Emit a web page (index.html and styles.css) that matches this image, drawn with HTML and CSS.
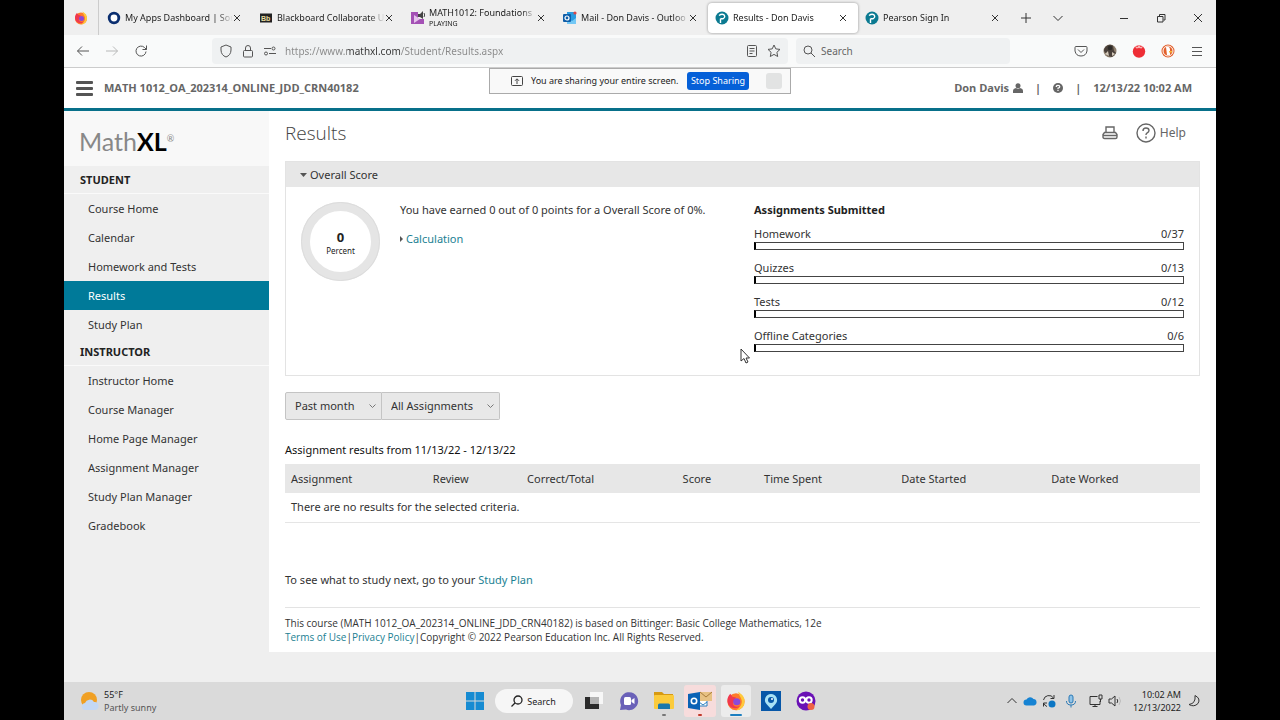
FILE: index.html
```
<!DOCTYPE html>
<html lang="en">
<head>
  <meta charset="UTF-8">
  <meta name="viewport" content="width=device-width, initial-scale=1.0">
  <title>Results - Don Davis</title>
  <link rel="stylesheet" href="styles.css">
</head>
<body>
  <div class="screen">

    <!-- Browser tabs -->
    <div class="tabbar">
      <button class="pinned" aria-label="Firefox">
        <svg width="14" height="14" viewBox="0 0 28 28"><circle cx="14" cy="15" r="12" fill="#ff7a2a"/><path d="M17 1c4 3 9 6 9 13a12 12 0 0 1-12 13c5-3 9-8 8-14-1-4-4-7-5-12z" fill="#ffc93c"/><path d="M2 13c0-4 2-7 4-9l3 4 5 1-3 5c-4 5 2 10 8 7-2 5-17 5-17-8z" fill="#f0384e"/><circle cx="15" cy="15" r="5" fill="#8a4ad8"/></svg>
      </button>
      <div class="tab">
        <svg class="favicon" viewBox="0 0 14 14"><circle cx="7" cy="7" r="4.8" fill="#fff" stroke="#0b2f70" stroke-width="2.8"/></svg>
        <span class="tab-title">My Apps Dashboard | Sou</span>
        <button class="close" aria-label="Close tab"><svg width="8" height="8" viewBox="0 0 8 8"><path d="M1 1l6 6M7 1L1 7"/></svg></button>
      </div>
      <div class="tab">
        <svg class="favicon" viewBox="0 0 14 14"><rect x="1" y="2.500" width="12" height="9" fill="#222"/><text x="2" y="10" font-size="7" font-weight="bold" fill="#e8dca0" font-family="Liberation Sans, sans-serif">Bb</text></svg>
        <span class="tab-title">Blackboard Collaborate U</span>
        <button class="close" aria-label="Close tab"><svg width="8" height="8" viewBox="0 0 8 8"><path d="M1 1l6 6M7 1L1 7"/></svg></button>
      </div>
      <div class="tab">
        <svg class="favicon" viewBox="0 0 14 14"><path d="M0 1h7v7h6v5H0z" fill="#a451b5"/><path d="M3 4l6 4-6 4z" fill="#e5c3ec"/><path d="M7 3h2l3-3v8L9 6H7z" fill="#444"/><path d="M13 2q1.500 2 0 4" stroke="#444" fill="none"/></svg>
        <span class="tab-title two-line">MATH1012: Foundations<small>PLAYING</small></span>
        <button class="close" aria-label="Close tab"><svg width="8" height="8" viewBox="0 0 8 8"><path d="M1 1l6 6M7 1L1 7"/></svg></button>
      </div>
      <div class="tab">
        <svg class="favicon" viewBox="0 0 14 14"><path d="M4 1h9v11H4z" fill="#2a9be0"/><path d="M4 7l5 3 4-3v6H4z" fill="#74c8f5"/><rect x="0" y="3" width="8" height="8" rx="1" fill="#0f5ea8"/><circle cx="4" cy="7" r="2" fill="none" stroke="#fff" stroke-width="1.200"/><circle cx="12" cy="2" r="1.600" fill="#d94848"/></svg>
        <span class="tab-title">Mail - Don Davis - Outloo</span>
        <button class="close" aria-label="Close tab"><svg width="8" height="8" viewBox="0 0 8 8"><path d="M1 1l6 6M7 1L1 7"/></svg></button>
      </div>
      <div class="tab active">
        <svg class="favicon" viewBox="0 0 14 14"><circle cx="7" cy="7" r="6.500" fill="#0b7a91"/><path d="M5.500 12V7.500M4 4.500q3-2 5-.6 1.600 2-.4 3.400-1.400.8-3 .2" fill="none" stroke="#fff" stroke-width="1.400"/></svg>
        <span class="tab-title">Results - Don Davis</span>
        <button class="close" aria-label="Close tab"><svg width="8" height="8" viewBox="0 0 8 8"><path d="M1 1l6 6M7 1L1 7"/></svg></button>
      </div>
      <div class="tab">
        <svg class="favicon" viewBox="0 0 14 14"><circle cx="7" cy="7" r="6.500" fill="#0b7a91"/><path d="M5.500 12V7.500M4 4.500q3-2 5-.6 1.600 2-.4 3.400-1.400.8-3 .2" fill="none" stroke="#fff" stroke-width="1.400"/></svg>
        <span class="tab-title">Pearson Sign In</span>
        <button class="close" aria-label="Close tab"><svg width="8" height="8" viewBox="0 0 8 8"><path d="M1 1l6 6M7 1L1 7"/></svg></button>
      </div>
      <button class="tab-tool" aria-label="New tab"><svg width="10" height="10" viewBox="0 0 10 10"><path d="M5 0v10M0 5h10"/></svg></button>
      <button class="tab-tool" aria-label="List all tabs"><svg width="10" height="10" viewBox="0 0 10 10"><path d="M.5 3L5 7.500 9.500 3"/></svg></button>
      <div class="window-buttons">
        <button aria-label="Minimize"><svg width="10" height="10" viewBox="0 0 10 10"><path d="M1 5.500h8"/></svg></button>
        <button aria-label="Restore"><svg width="10" height="10" viewBox="0 0 10 10"><path d="M1.500 3.500h5.500v5.500H1.500zM3.500 3V1.500H9V7H7.500"/></svg></button>
        <button aria-label="Close"><svg width="10" height="10" viewBox="0 0 10 10"><path d="M1 1l8 8M9 1L1 9"/></svg></button>
      </div>
    </div>

    <!-- Address bar -->
    <div class="navbar">
      <div class="nav-buttons">
        <button aria-label="Back"><svg width="14" height="14" viewBox="0 0 14 14"><path d="M13 7H1.500M6 2.500L1.500 7 6 11.500"/></svg></button>
        <button aria-label="Forward" class="faded"><svg width="14" height="14" viewBox="0 0 14 14"><path d="M1 7h11.500M8 2.500L12.500 7 8 11.500"/></svg></button>
        <button aria-label="Reload"><svg width="14" height="14" viewBox="0 0 14 14"><path d="M12 7.500a5 5 0 1 1-1.500-4L12.500 5.500M12.500 1.500v4h-4"/></svg></button>
      </div>
      <div class="urlbar">
        <svg width="14" height="14" viewBox="0 0 14 14"><path d="M7 1L12 3v3c0 3.500-2 6-5 7-3-1-5-3.500-5-7V3z"/></svg>
        <svg width="14" height="14" viewBox="0 0 14 14"><rect x="2.500" y="6.500" width="9" height="6.500" rx="1"/><path d="M4.500 6.500V4a2.500 2.500 0 0 1 5 0v2.500"/></svg>
        <svg width="14" height="14" viewBox="0 0 14 14"><path d="M1 4.500h7M6 9.500h7"/><circle cx="10.500" cy="4.500" r="1.500"/><circle cx="3" cy="9.500" r="1.500"/></svg>
        <input class="url" type="text" aria-label="Address" value="https://www.mathxl.com/Student/Results.aspx">
        <button aria-label="Reader view"><svg width="14" height="14" viewBox="0 0 14 14"><rect x="2.500" y="1.500" width="9" height="11" rx="1"/><path d="M4.500 4.500h5M4.500 7h5M4.500 9.500h3"/></svg></button>
        <button aria-label="Bookmark"><svg width="14" height="14" viewBox="0 0 14 14"><path d="M7 1l1.800 3.900 4.200.5-3.100 2.900.8 4.200L7 10.400l-3.700 2.100.8-4.200L1 5.400l4.200-.5z"/></svg></button>
      </div>
      <div class="searchbar">
        <svg width="14" height="14" viewBox="0 0 14 14"><circle cx="6" cy="6" r="4"/><path d="M9 9l4 4"/></svg>
        <input type="text" placeholder="Search" aria-label="Search the web">
      </div>
      <div class="extensions">
        <button aria-label="Pocket"><svg width="14" height="14" viewBox="0 0 14 14"><path d="M2 2.500h10q1 0 1 1V7q-1 5-6 5T1 7V3.500q0-1 1-1zM4 5.500l3 3 3-3"/></svg></button>
        <button aria-label="Profile"><svg width="14" height="14" viewBox="0 0 14 14" class="solid"><circle cx="7" cy="7" r="6.500" fill="#8b7c6b"/><path d="M1 7a6 6 0 0 1 9-5.300L11 7l2 2-4 4-4-1z" fill="#4a403a"/><circle cx="7" cy="4" r="2.300" fill="#2d2926"/><path d="M2 10l3-3 1 5zM9 8l3 2-3 2z" fill="#d5cabb"/></svg></button>
        <button aria-label="Tomato timer"><svg width="14" height="14" viewBox="0 0 14 14" class="solid"><circle cx="7" cy="7.500" r="6.200" fill="#ee2d35"/><path d="M2.500 2l3 1L7 1l1.500 2 3-1-2 2.500L7 4 4.500 4.500z" fill="#f9b4b4"/></svg></button>
        <button aria-label="DuckDuckGo"><svg width="14" height="14" viewBox="0 0 14 14" class="solid"><circle cx="7" cy="7" r="6.500" fill="#e2602c"/><circle cx="7" cy="7" r="5" fill="none" stroke="#fff"/><path d="M5 3q4-1 4 3v5H6z" fill="#fff"/><path d="M8 7h3v1.500H8z" fill="#f8b934"/></svg></button>
        <button aria-label="Menu"><svg width="14" height="14" viewBox="0 0 14 14"><path d="M2 3.500h10M2 7.500h10M2 11.500h10"/></svg></button>
      </div>
    </div>

    <!-- Course header -->
    <header class="course-header">
      <button class="burger" aria-label="Toggle menu"><span></span><span></span><span></span></button>
      <span class="course-name">MATH 1012_OA_202314_ONLINE_JDD_CRN40182</span>
      <div class="user-info">
        <span class="user">Don Davis <svg width="10" height="10" viewBox="0 0 10 10"><circle cx="5" cy="2.700" r="2.500"/><path d="M0 10V8q0-2.500 3-3 2 1.300 4 0 3 .5 3 3v2z"/></svg></span>
        <span>|</span>
        <svg width="10" height="10" viewBox="0 0 10 10"><circle cx="5" cy="5" r="5"/><path d="M3.200 4q0-1.700 1.800-1.700T6.800 3.800Q6.800 4.700 5 5.200V6M5 6.800v1.300" stroke="#fff" stroke-width="1.200" fill="none"/></svg>
        <span>|</span>
        <span>12/13/22 10:02 AM</span>
      </div>
      <div class="share-bar">
        <svg width="12" height="10" viewBox="0 0 12 10"><rect x=".5" y=".5" width="11" height="9" rx="1"/><path d="M6 8V3M4 4.800l2-2 2 2"/></svg>
        <span>You are sharing your entire screen.</span>
        <button class="stop">Stop Sharing</button>
        <span class="share-extra"></span>
      </div>
    </header>

    <div class="app">
      <nav class="sidebar">
        <div class="logo">Math<b>XL</b><sup>®</sup></div>
        <h2>STUDENT</h2>
        <ul>
          <li><a href="#">Course Home</a></li>
          <li><a href="#">Calendar</a></li>
          <li><a href="#">Homework and Tests</a></li>
          <li><a href="#" class="current">Results</a></li>
          <li><a href="#">Study Plan</a></li>
        </ul>
        <h2>INSTRUCTOR</h2>
        <ul>
          <li><a href="#">Instructor Home</a></li>
          <li><a href="#">Course Manager</a></li>
          <li><a href="#">Home Page Manager</a></li>
          <li><a href="#">Assignment Manager</a></li>
          <li><a href="#">Study Plan Manager</a></li>
          <li><a href="#">Gradebook</a></li>
        </ul>
      </nav>

      <main class="main">
        <div class="page-head">
          <h1>Results</h1>
          <button class="print" aria-label="Print"><svg width="16" height="14" viewBox="0 0 16 14"><path d="M4 6.500V1h8v5.500M2.500 12.500q-1.500 0-1.500-1.500V8.500l1.500-2h11l1.500 2V11q0 1.500-1.500 1.500zM1.500 9.500h13"/></svg></button>
          <a class="help" href="#"><svg width="20" height="20" viewBox="0 0 20 20"><circle cx="10" cy="10" r="9"/><path d="M7 8q0-3 3-3t3 2.500Q13 9 11 10q-1 .6-1 2M10 13.500v2"/></svg>Help</a>
        </div>

        <section class="panel">
          <button class="panel-title"><svg width="7" height="4" viewBox="0 0 7 4"><path d="M0 0h7L3.500 4z"/></svg>Overall Score</button>
          <div class="panel-body">
            <div class="donut"><strong>0</strong><span>Percent</span></div>
            <div class="summary">
              <p>You have earned 0 out of 0 points for a Overall Score of 0%.</p>
              <a href="#"><svg width="3" height="6" viewBox="0 0 3 6"><path d="M0 0l3 3-3 3z"/></svg>Calculation</a>
            </div>
            <div class="submitted">
              <h3>Assignments Submitted</h3>
              <div class="progress"><span>Homework</span><span>0/37</span><div class="bar"></div></div>
              <div class="progress"><span>Quizzes</span><span>0/13</span><div class="bar"></div></div>
              <div class="progress"><span>Tests</span><span>0/12</span><div class="bar"></div></div>
              <div class="progress"><span>Offline Categories</span><span>0/6</span><div class="bar"></div></div>
            </div>
          </div>
        </section>

        <div class="filters">
          <div class="filter period">
            <select aria-label="Period"><option>Past month</option><option>Past week</option></select>
            <svg width="7" height="5" viewBox="0 0 7 5"><path d="M.5.500l3 3 3-3"/></svg>
          </div>
          <div class="filter kind">
            <select aria-label="Assignment type"><option>All Assignments</option><option>Homework</option></select>
            <svg width="7" height="5" viewBox="0 0 7 5"><path d="M.5.500l3 3 3-3"/></svg>
          </div>
        </div>

        <table class="results">
          <caption>Assignment results from 11/13/22 - 12/13/22</caption>
          <thead>
            <tr>
              <th class="c-assignment">Assignment</th>
              <th class="c-review">Review</th>
              <th class="c-correct">Correct/Total</th>
              <th class="c-score">Score</th>
              <th class="c-time">Time Spent</th>
              <th class="c-started">Date Started</th>
              <th>Date Worked</th>
            </tr>
          </thead>
          <tbody>
            <tr><td colspan="7">There are no results for the selected criteria.</td></tr>
          </tbody>
        </table>

        <p class="next">To see what to study next, go to your <a href="#">Study Plan</a></p>

        <footer class="legal">
          This course (MATH 1012_OA_202314_ONLINE_JDD_CRN40182) is based on Bittinger: Basic College Mathematics, 12e<br>
          <a href="#">Terms of Use</a>|<a href="#">Privacy Policy</a>|Copyright © 2022 Pearson Education Inc. All Rights Reserved.
        </footer>
      </main>
    </div>

    <!-- Windows taskbar -->
    <div class="taskbar">
      <div class="weather">
        <svg width="20" height="20" viewBox="0 0 20 20"><circle cx="9" cy="9" r="8" fill="#f0a024"/><path d="M6 19a3.500 3.500 0 0 1-1-7 5 5 0 0 1 9-1 4 4 0 0 1 1 8z" fill="#c4d8f4"/></svg>
        <div>55°F<br><span>Partly sunny</span></div>
      </div>
      <div class="dock">
        <button aria-label="Start"><svg width="20" height="20" viewBox="0 0 20 20"><path d="M1 1h8.500v8.500H1zM10.500 1H19v8.500h-8.500zM1 10.500h8.500V19H1zM10.500 10.500H19V19h-8.500z" fill="#168bd2"/></svg></button>
        <button class="task-search"><svg width="12" height="12" viewBox="0 0 12 12"><circle cx="7" cy="5" r="4" fill="none" stroke="#222" stroke-width="1.300"/><path d="M4 8l-3.500 3.500" stroke="#222" stroke-width="1.300"/></svg>Search</button>
        <button aria-label="Task view"><svg width="20" height="20" viewBox="0 0 20 20"><path d="M6 1h13v12H6z" fill="#f7f7f7"/><path d="M1 6h14v12H1z" fill="#2b2b2b"/><path d="M6 6h9v7H6z" fill="#b5b5b5"/></svg></button>
        <button aria-label="Chat"><svg width="20" height="20" viewBox="0 0 20 20"><path d="M1 19l1-5a9 9 0 1 1 5 4.600z" fill="#6a61b8"/><rect x="5" y="6" width="7" height="8" rx="1.500" fill="#fff"/><path d="M12.500 9l3-2v6l-3-2z" fill="#fff"/></svg></button>
        <button aria-label="File Explorer" class="open"><svg width="20" height="20" viewBox="0 0 20 20"><path d="M0 1h8l2 2h9v4H0z" fill="#d79a12"/><rect x="0" y="4" width="20" height="14" rx="1" fill="#fbcb3c"/><path d="M4 18v-4q0-1.500 1.500-1.500h9q1.500 0 1.500 1.500v4z" fill="#1a78ad"/></svg></button>
        <button aria-label="Outlook" class="open alert"><svg width="24" height="20" viewBox="0 0 24 20"><path d="M9 5h10v10H9z" fill="#fff" stroke="#2a7fc0"/><path d="M11 11l4 3 4-3" fill="none" stroke="#2a7fc0"/><path d="M12 1h12v9H12z" fill="#e7c183"/><path d="M12 1l6 5 6-5" fill="none" stroke="#a97c3c"/><path d="M0 3l12-2v18L0 17z" fill="#0b62b5"/><circle cx="6" cy="10" r="2.700" fill="none" stroke="#fff" stroke-width="1.600"/></svg></button>
        <button aria-label="Firefox" class="open focused"><svg width="20" height="20" viewBox="0 0 28 28"><circle cx="14" cy="15" r="12" fill="#ff7a2a"/><path d="M17 1c4 3 9 6 9 13a12 12 0 0 1-12 13c5-3 9-8 8-14-1-4-4-7-5-12z" fill="#ffc93c"/><path d="M2 13c0-4 2-7 4-9l3 4 5 1-3 5c-4 5 2 10 8 7-2 5-17 5-17-8z" fill="#f0384e"/><circle cx="15" cy="15" r="5" fill="#8a4ad8"/></svg></button>
        <button aria-label="Passwords"><svg width="20" height="20" viewBox="0 0 20 20"><path d="M0 0h20v20H0z" fill="#0757a8"/><path d="M10 3a6 6 0 0 1 4.500 10L10 18l-4.500-5A6 6 0 0 1 10 3z" fill="#a9e2f5"/><circle cx="10" cy="9" r="3" fill="#0757a8"/><circle cx="11" cy="8" r="1" fill="#fff"/></svg></button>
        <button aria-label="Camera"><svg width="20" height="20" viewBox="0 0 20 20"><circle cx="10" cy="10" r="9.500" fill="#6a11b5"/><circle cx="6.500" cy="9" r="2.700" fill="none" stroke="#fff" stroke-width="2"/><circle cx="13" cy="9" r="2.700" fill="none" stroke="#fff" stroke-width="2"/><circle cx="15" cy="15.500" r="3.500" fill="#ef6245"/></svg></button>
      </div>
      <div class="tray">
        <svg width="12" height="14" viewBox="0 0 12 14"><path d="M1.500 9L6 4.500 10.500 9"/></svg>
        <svg width="14" height="14" viewBox="0 0 14 14" class="solid"><path d="M3.500 11.500a3 3 0 0 1 0-6 4 4 0 0 1 7-.5 3.300 3.300 0 0 1 .5 6.500z" fill="#1683d3"/></svg>
        <svg width="14" height="14" viewBox="0 0 14 14"><path d="M1.500 6a5.500 5.500 0 0 1 10-2M12 1v3.500H8.500M5 12.500a5 5 0 0 1-3-3M1.500 12.500V9H5"/><circle cx="10" cy="10" r="3.500" fill="#0b76c4" stroke="none"/></svg>
        <svg width="14" height="14" viewBox="0 0 14 14" class="mic"><rect x="5" y="1" width="4" height="8" rx="2" fill="#8ec3e8"/><path d="M2.500 7q0 4 4.500 4t4.500-4M7 11v2.500"/></svg>
        <svg width="14" height="14" viewBox="0 0 14 14"><path d="M8.500 2.500H1v8h10V7M3.500 12.500h5M6 10.500v2M10 1h3v4h-3zM11.500 5v3"/></svg>
        <svg width="14" height="14" viewBox="0 0 14 14"><path d="M1 5h2.500L7 2v10L3.500 9H1z"/><path d="M9 5q1.500 2 0 4"/><path d="M11 3q3 4 0 8" stroke="#bbb"/></svg>
        <div class="clock">10:02 AM<br>12/13/2022</div>
        <svg width="12" height="14" viewBox="0 0 12 14"><path d="M7 1.500q6 3 3 8-4 4-9 1 7-1 6-9z"/></svg>
      </div>
    </div>

    <svg class="pointer" width="10" height="16" viewBox="0 0 10 16"><path d="M1 1v12l3-2.500 2 4.500 2-1-2-4h3.500z"/></svg>
  </div>
</body>
</html>
```
FILE: styles.css
```
* {
  box-sizing: border-box;
}
body {
  margin: 0;
  background: #000;
  font-family: "Noto Sans", "Open Sans", sans-serif;
  font-size: 11px;
  line-height: 16px;
  color: #333;
}
button,
input,
select {
  font: inherit;
  color: inherit;
  border: none;
  background: none;
  padding: 0;
  margin: 0;
}
button {
  display: flex;
  align-items: center;
  justify-content: center;
  cursor: pointer;
}
a {
  color: #1b7f93;
  text-decoration: none;
}
svg {
  display: block;
  flex: none;
}
.screen {
  position: relative;
  display: flex;
  flex-direction: column;
  min-height: 100vh;
  margin: 0 5%;
  background: #efefef;
}

/* tabs */
.tabbar {
  display: flex;
  align-items: center;
  height: 35px;
  background: #efefef;
  font-size: 9px;
  color: #222;
}
.tabbar button path {
  fill: none;
  stroke: #333;
}
.tabbar .pinned {
  width: 35px;
  height: 35px;
  border-right: 1px solid #ccc;
  margin-right: 1px;
}
.tabbar .pinned path:nth-of-type(1) {
  fill: #ffc93c;
  stroke: none;
}
.tabbar .pinned path:nth-of-type(2) {
  fill: #f0384e;
  stroke: none;
}
.tab {
  display: flex;
  align-items: center;
  flex: 0 1 152px;
  min-width: 0;
  height: 30px;
  padding: 0 11px 0 7px;
  border-radius: 4px;
}
.tab.active {
  background: #fff;
  box-shadow: 0 0 3px rgba(0,0,0,0.4);
  flex-basis: 150px;
}
.favicon {
  width: 14px;
  height: 14px;
  margin-right: 4px;
}
.tab-title {
  flex: 1;
  min-width: 0;
  overflow: hidden;
  white-space: nowrap;
  -webkit-mask-image: linear-gradient(to right, #000 85%, transparent);
  mask-image: linear-gradient(to right, #000 85%, transparent);
}
.two-line {
  line-height: 12px;
}
.tab-title small {
  display: block;
  font-size: 7px;
  line-height: 9px;
}
.tab-tool {
  width: 32px;
  height: 30px;
}
.window-buttons {
  display: flex;
  margin-left: auto;
}
.window-buttons button {
  width: 37px;
  height: 30px;
}

/* address bar */
.navbar {
  display: flex;
  align-items: center;
  height: 33px;
  background: #f9fafa;
  border-bottom: 1px solid #ccc;
  font-size: 10px;
  color: #666;
}
.navbar svg {
  fill: none;
  stroke: #555;
}
.navbar svg.solid {
  stroke: none;
}
.nav-buttons {
  display: flex;
  gap: 15px;
  width: 148px;
  padding-left: 12px;
}
.nav-buttons .faded {
  opacity: 0.4;
}
.urlbar,
.searchbar {
  display: flex;
  align-items: center;
  gap: 8px;
  height: 26px;
  background: #eff1f2;
  border-radius: 4px;
}
.urlbar {
  flex: 562;
  padding: 0 7px;
}
.searchbar {
  flex: 202;
  gap: 5px;
  margin-left: 8px;
  padding: 0 6px;
}
.navbar input {
  flex: 1;
  min-width: 0;
  outline: none;
}
.navbar input::placeholder {
  color: #666;
  opacity: 1;
}
.url {
  background: linear-gradient(to right, #888 62px, #333 62px, #333 115px, #888 115px);
  -webkit-background-clip: text;
  background-clip: text;
  color: transparent;
}
.extensions {
  display: flex;
  justify-content: flex-end;
  gap: 15px;
  width: 206px;
  padding-right: 12px;
}

/* course header */
.course-header {
  position: relative;
  display: flex;
  align-items: center;
  height: 43px;
  padding: 0 24px 0 12px;
  background: #fff;
  border-bottom: 3px solid #08708a;
  color: #666;
  font-family: "Open Sans", sans-serif;
  font-weight: bold;
}
.burger {
  flex-direction: column;
  gap: 3px;
  width: 17px;
  margin-right: 11px;
}
.burger span {
  width: 17px;
  height: 3px;
  border-radius: 1px;
  background: #555;
}
.user-info {
  display: flex;
  align-items: center;
  gap: 12px;
  margin-left: auto;
}
.user-info svg {
  fill: #666;
}
.user {
  display: flex;
  align-items: center;
  gap: 4px;
}
.share-bar {
  position: absolute;
  top: 0;
  left: 50%;
  transform: translateX(-50%);
  display: flex;
  align-items: center;
  width: 302px;
  height: 26px;
  padding-left: 21px;
  background: #f9f9f9;
  border: 1px solid #aaa;
  font-family: "Noto Sans", sans-serif;
  font-size: 9px;
  font-weight: normal;
  color: #222;
  white-space: nowrap;
}
.share-bar svg {
  margin-right: 8px;
  fill: none;
  stroke: #444;
}
.stop {
  flex: none;
  width: 62px;
  height: 18px;
  margin-left: auto;
  border-radius: 3px;
  background: #0560d8;
  color: #fff;
}
.share-extra {
  flex: none;
  width: 16px;
  height: 16px;
  margin: 0 8px 0 17px;
  border-radius: 3px;
  background: #e2e3e3;
}

/* sidebar */
.app {
  display: flex;
  align-items: flex-start;
  flex: 1;
}
.sidebar {
  flex: none;
  width: 205px;
}
.logo {
  height: 55px;
  padding: 16px 0 0 15px;
  background: #f8f8f8;
  font-family: Lato, sans-serif;
  font-size: 25px;
  line-height: 28px;
  color: #888;
}
.logo b {
  color: #000;
}
.logo sup {
  font-size: 9px;
  line-height: 9px;
  vertical-align: 9px;
}
.sidebar h2 {
  margin: 0;
  padding-left: 16px;
  font-size: 11px;
  line-height: 27px;
  color: #222;
  border-bottom: 1px solid #fafafa;
}
.sidebar ul {
  list-style: none;
  margin: 0;
  padding: 0;
}
.sidebar ul + h2 {
  line-height: 26px;
}
.sidebar a {
  display: block;
  padding-left: 24px;
  line-height: 29px;
  color: #333;
}
.sidebar .current {
  background: #007a99;
  color: #fff;
}

/* main column */
.main {
  flex: 1;
  min-width: 0;
  padding: 0 16px 8px;
  background: #fff;
}
.page-head {
  display: flex;
  align-items: center;
  height: 50px;
  padding: 0 14px 6px 0;
}
.page-head h1 {
  margin: 0 auto 0 0;
  font-family: "Open Sans", sans-serif;
  font-size: 19px;
  font-weight: 300;
  color: #444;
}
.page-head svg {
  fill: none;
  stroke: #666;
  stroke-width: 1.4;
}
.help {
  display: flex;
  align-items: center;
  gap: 4px;
  margin-left: 18px;
  font-size: 12px;
  color: #666;
}
.panel {
  border: 1px solid #e3e3e3;
}
.panel-title {
  justify-content: flex-start;
  gap: 3px;
  width: 100%;
  height: 25px;
  padding-left: 14px;
  background: #e7e7e7;
}
.panel-title svg,
.summary svg {
  fill: #555;
}
.panel-body {
  display: flex;
  align-items: flex-start;
  padding: 15px;
  min-height: 188px;
}
.donut {
  display: flex;
  flex-direction: column;
  align-items: center;
  justify-content: center;
  width: 79px;
  height: 79px;
  padding-top: 3px;
  border: 9px solid #e5e5e5;
  border-radius: 50%;
  outline: 1px solid #dcdcdc;
  outline-offset: -1px;
  color: #222;
}
.donut strong {
  font-size: 13px;
  line-height: 16px;
}
.donut span {
  font-size: 8px;
  line-height: 12px;
}
.summary {
  flex: 1;
  margin-left: 20px;
}
.summary p {
  margin: 0 0 13px;
}
.summary a {
  display: flex;
  align-items: center;
  gap: 3px;
}
.submitted {
  width: 430px;
}
.submitted h3 {
  margin: 0 0 8px;
  font-size: 11px;
  line-height: 16px;
  color: #222;
}
.progress {
  display: flex;
  flex-wrap: wrap;
  justify-content: space-between;
  margin-bottom: 10px;
}
.progress:last-child {
  margin-bottom: 0;
}
.bar {
  width: 100%;
  height: 8px;
  border: 1px solid #444;
  border-left: 2px solid #000;
}

/* filters */
.filters {
  display: flex;
  margin: 16px 0 22px;
}
.filter {
  position: relative;
}
.filter select {
  appearance: none;
  width: 100%;
  height: 28px;
  padding: 0 9px;
  border: 1px solid #c4c4c4;
  background: #e8e8e8;
}
.period {
  width: 97px;
}
.period select {
  border-radius: 2px 0 0 2px;
}
.kind {
  width: 118px;
}
.kind select {
  border-left: none;
  border-radius: 0 2px 2px 0;
}
.filter svg {
  position: absolute;
  right: 6px;
  top: 12px;
  fill: none;
  stroke: #777;
  pointer-events: none;
}

/* results table */
.results {
  width: 100%;
  table-layout: fixed;
  border-collapse: collapse;
}
.results caption {
  text-align: left;
  padding-bottom: 6px;
  color: #111;
}
.results th,
.results td {
  height: 29px;
  padding: 0 6px;
  font-weight: normal;
  text-align: left;
}
.results th {
  background: #e7e7e7;
}
.results td {
  border-bottom: 1px solid #e5e5e5;
}
.c-assignment { width: 15.5%; }
.c-review { width: 10.3%; }
.c-correct { width: 17%; }
.c-score { width: 8.9%; }
.c-time { width: 15%; }
.c-started { width: 16.4%; }

.next {
  margin: 49px 0 19px;
}
.legal {
  padding-top: 8px;
  border-top: 1px solid #e3e3e3;
  font-family: "Open Sans", sans-serif;
  font-size: 10px;
  line-height: 14px;
}

/* taskbar */
.taskbar {
  display: grid;
  grid-template-columns: 1fr auto 1fr;
  align-items: center;
  height: 38px;
  background: #dadada;
  font-size: 9px;
  line-height: 13px;
  color: #222;
}
.weather {
  display: flex;
  align-items: center;
  gap: 4px;
  padding-left: 16px;
}
.weather span {
  color: #555;
}
.dock {
  display: flex;
  align-items: center;
  gap: 5px;
}
.dock button {
  position: relative;
  width: 30px;
  height: 32px;
  border-radius: 3px;
}
.dock .task-search {
  gap: 4px;
  width: 78px;
  height: 24px;
  margin-right: 1px;
  border-radius: 12px;
  background: #f6f6f6;
  font-size: 9px;
}
.dock .alert {
  width: 32px;
  background: #f7dcdc;
}
.dock .focused {
  background: #ececec;
}
.open::after {
  content: "";
  position: absolute;
  bottom: 1px;
  left: 50%;
  width: 4px;
  height: 2px;
  margin-left: -2px;
  border-radius: 1px;
  background: #777;
}
.alert::after {
  background: #c0392b;
}
.focused::after {
  width: 12px;
  margin-left: -6px;
  background: #1c7fc0;
}
.tray {
  display: flex;
  align-items: center;
  justify-content: flex-end;
  gap: 5px;
  padding-right: 16px;
}
.tray svg {
  fill: none;
  stroke: #333;
}
.tray svg.solid {
  stroke: none;
}
.tray svg.mic {
  margin: 0 6px 0 3px;
  stroke: #2a79b5;
}
.clock {
  margin: 0 2px 0 6px;
  text-align: right;
}
.pointer {
  position: absolute;
  top: 348px;
  left: 676px;
  fill: #fff;
  stroke: #333;
}
```
